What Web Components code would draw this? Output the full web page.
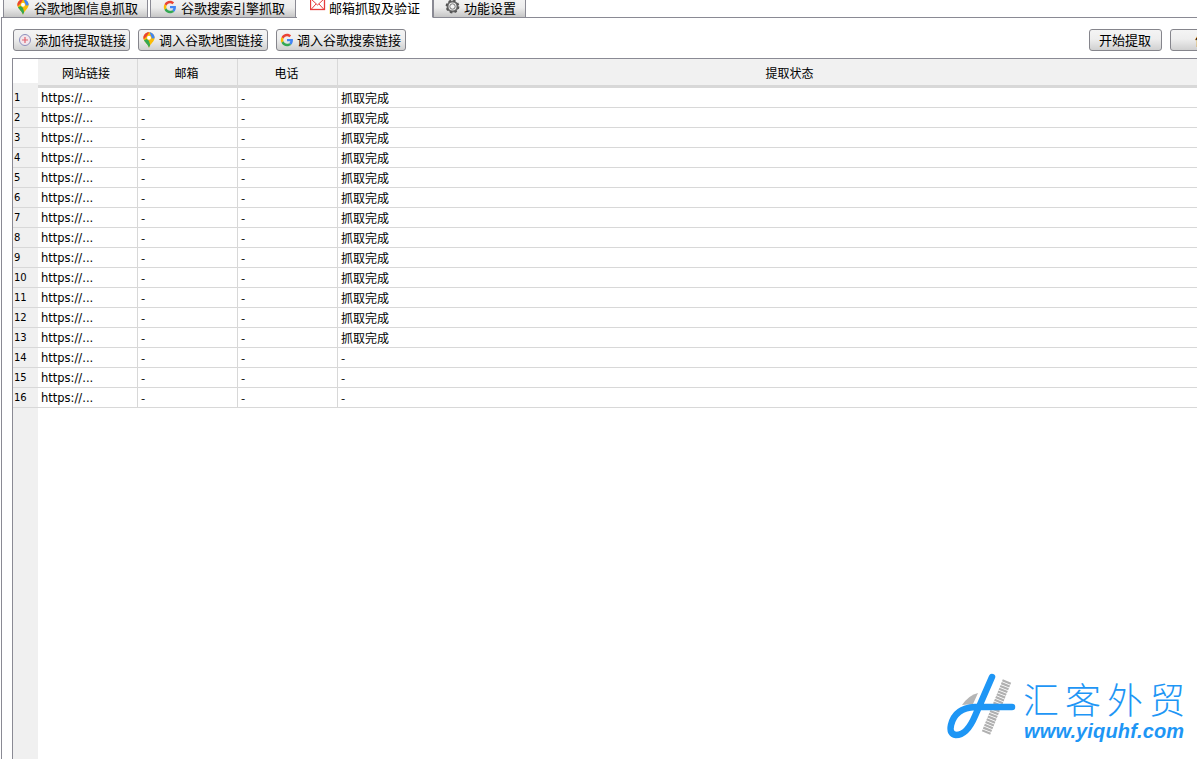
<!DOCTYPE html>
<html>
<head>
<meta charset="utf-8">
<style>
    html, body { margin: 0; height: 100%; overflow: hidden; background: #fff; }
    body { font-family: "Noto Sans CJK SC", "Liberation Sans", sans-serif; color: #000; }
</style>
</head>
<body>
<app-window>
    <tab-bar slot="tabs">
        <tab-item style="margin-left:3px;width:145px" pad="11"><app-icon name="map" slot="icon"></app-icon>谷歌地图信息抓取</tab-item>
        <tab-item style="margin-left:2px;width:146px" pad="11"><app-icon name="google" slot="icon"></app-icon>谷歌搜索引擎抓取</tab-item>
        <tab-item style="margin-left:1px;width:136px" pad="13" active><app-icon name="mail" slot="icon"></app-icon>邮箱抓取及验证</tab-item>
        <tab-item style="width:93px" pad="11"><app-icon name="gear" slot="icon"></app-icon>功能设置</tab-item>
    </tab-bar>
    <tool-bar slot="tools">
        <tool-button style="width:117px;padding-left:3px"><app-icon name="plus" slot="icon"></app-icon>添加待提取链接</tool-button>
        <tool-button style="width:130px"><app-icon name="map" slot="icon"></app-icon>调入谷歌地图链接</tool-button>
        <tool-button style="width:130px"><app-icon name="google" slot="icon"></app-icon>调入谷歌搜索链接</tool-button>
        <tool-button style="width:73px;margin-left:auto;padding-left:9px">开始提取</tool-button>
        <tool-button style="width:103px;padding-left:24px">停止提取</tool-button>
    </tool-bar>
    <data-table slot="table"></data-table>
</app-window>
<brand-logo></brand-logo>

<script>
class AppWindow extends HTMLElement {
    constructor() {
        super();
        this.root = this.attachShadow({ mode: 'open' });
        this.root.innerHTML = `
            <style>
                :host { display: flex; flex-direction: column; width: 1197px; height: 759px; overflow: hidden; }
                #pane {
                    flex: 1;
                    min-height: 0;
                    display: flex;
                    flex-direction: column;
                    margin-top: -1px;
                    margin-left: 1px;
                    border-top: 1px solid #8a8a94;
                    border-left: 1px solid #8a8a94;
                    padding: 11px 0 0 10px;
                    gap: 8px;
                }
            </style>
            <slot name="tabs"></slot>
            <div id="pane">
                <slot name="tools"></slot>
                <slot name="table"></slot>
            </div>
        `;
    }
}

class TabBar extends HTMLElement {
    constructor() {
        super();
        this.root = this.attachShadow({ mode: 'open' });
        this.root.innerHTML = `
            <style>
                :host { display: flex; align-items: flex-end; height: 18px; position: relative; z-index: 1; }
            </style>
            <slot></slot>
        `;
    }
}

class TabItem extends HTMLElement {
    constructor() {
        super();
        this.root = this.attachShadow({ mode: 'open' });
        this.root.innerHTML = `
            <style>
                :host {
                    display: flex;
                    align-items: center;
                    gap: 3px;
                    box-sizing: border-box;
                    height: 18px;
                    padding-left: ${this.getAttribute('pad')}px;
                    padding-bottom: 2px;
                    border: 1px solid #8a8a94;
                    border-top: 0;
                    background: linear-gradient(#f2f2f2, #ececec 45%, #c6c6c6);
                    font-size: 13px;
                    line-height: 16px;
                    white-space: nowrap;
                }
                :host([active]) { background: #fff; border-bottom-color: #fff; border-left: 0; border-right-color: #8a8a94; }
                ::slotted(app-icon) { margin-bottom: 1px; }
            </style>
            <slot name="icon"></slot><slot></slot>
        `;
    }
}

class ToolBar extends HTMLElement {
    constructor() {
        super();
        this.root = this.attachShadow({ mode: 'open' });
        this.root.innerHTML = `
            <style>
                :host { display: flex; gap: 8px; width: 1260px; height: 21px; padding-left: 1px; flex: none; }
            </style>
            <slot></slot>
        `;
    }
}

class ToolButton extends HTMLElement {
    constructor() {
        super();
        this.root = this.attachShadow({ mode: 'open' });
        this.root.innerHTML = `
            <style>
                :host {
                    display: flex;
                    align-items: center;
                    gap: 2px;
                    box-sizing: border-box;
                    flex: none;
                    height: 22px;
                    padding: 0 0 2px 2px;
                    border: 1px solid #85858c;
                    border-radius: 3px;
                    background: linear-gradient(#f4f4f4, #eeeeee 45%, #d0d0d0);
                    font-size: 13px;
                    white-space: nowrap;
                }
                ::slotted(app-icon) { margin-bottom: -2px; }
            </style>
            <slot name="icon"></slot><slot></slot>
        `;
    }
}

class AppIcon extends HTMLElement {
    constructor() {
        super();
        this.root = this.attachShadow({ mode: 'open' });
        const icons = {
            map: `<svg width="16" height="16" viewBox="0 0 16 16">
                    <defs><clipPath id="p"><path d="M8 .2C4.800 .2 2.400 2.800 2.400 5.800c0 3.800 4.100 5.600 5.600 10 1.500-4.400 5.600-6.200 5.600-10C13.600 2.800 11.200 .2 8 .2z"/></clipPath></defs>
                    <g clip-path="url(#p)">
                        <rect width="16" height="16" fill="#fbbc04"/>
                        <path d="M2 16V8.500l4-1.500 2 2 2 7z" fill="#34a853"/>
                        <path d="M8.500 0H16v6l-5 .5z" fill="#4285f4"/>
                        <path d="M2 0h6.500L5.500 4.500 2 8z" fill="#ea4335"/>
                    </g>
                    <circle cx="8" cy="5.800" r="2" fill="#fff"/>
                  </svg>`,
            google: `<svg width="16" height="16" viewBox="-7 -7 62 62">
                    <path fill="#ea4335" d="M24 9.500c3.500 0 6.700 1.300 9.100 3.400l6.800-6.800C35.800 2.400 30.300 0 24 0 14.600 0 6.500 5.400 2.600 13.200l7.900 6.100C12.400 13.600 17.700 9.500 24 9.500z"/>
                    <path fill="#4285f4" d="M47 24.500c0-1.600-.1-3.100-.4-4.500H24v9h13c-.6 3-2.300 5.500-4.800 7.200l7.700 6C44.400 37.900 47 31.800 47 24.500z"/>
                    <path fill="#fbbc05" d="M10.500 28.700c-.5-1.500-.8-3-.8-4.700s.3-3.200.8-4.700l-7.900-6.100C.9 16.500 0 20.100 0 24s.9 7.500 2.600 10.800z"/>
                    <path fill="#34a853" d="M24 48c6.500 0 11.900-2.100 15.900-5.800l-7.700-6c-2.100 1.400-4.900 2.300-8.200 2.300-6.300 0-11.600-4.100-13.500-9.800l-7.900 6.100C6.500 42.600 14.600 48 24 48z"/>
                  </svg>`,
            mail: `<svg width="16" height="16" viewBox="0 0 16 16" fill="none" stroke="#e63c3c" style="margin-top:-5px">
                    <rect x=".5" y="1.500" width="14" height="11" fill="#fff" stroke-width="1.300"/>
                    <path d="M1 2l6.500 6L14 2M1 12.500l5-5.500M14 12.500l-5-5.500"/>
                  </svg>`,
            gear: `<svg width="16" height="16" viewBox="0 0 16 16">
                    <circle cx="7.500" cy="7.500" r="5" fill="none" stroke="#666" stroke-width="2"/>
                    <circle cx="7.500" cy="7.500" r="6" fill="none" stroke="#555" stroke-width="1.800" stroke-dasharray="2.400 2.310"/>
                    <circle cx="7.500" cy="7.500" r="2.700" fill="#f4f4f4" stroke="#777"/>
                  </svg>`,
            plus: `<svg width="16" height="16" viewBox="0 0 16 16">
                    <circle cx="8" cy="8" r="5.500" fill="#f3e6ec" stroke="#8b8fbc"/>
                    <path d="M8 5v6M5 8h6" stroke="#e0626e" stroke-width="1.200"/>
                  </svg>`
        };
        this.root.innerHTML = `
            <style>:host { display: inline-flex; flex: none; }</style>
            ${icons[this.getAttribute('name')]}
        `;
    }
}

class DataTable extends HTMLElement {
    constructor() {
        super();
        this.root = this.attachShadow({ mode: 'open' });
        this.headers = ['网站链接', '邮箱', '电话', '提取状态'];
    }

    connectedCallback() {
        this.render();
    }

    render() {
        let rows = '';
        for (let i = 1; i <= 16; i++) {
            rows += `
                <div class="num">${i}</div>
                <div class="cell link">https://...</div>
                <div class="cell">-</div>
                <div class="cell">-</div>
                <div class="cell status">${i <= 13 ? '抓取完成' : '-'}</div>
            `;
        }
        this.root.innerHTML = `
            <style>
                :host {
                    display: block;
                    flex: 1;
                    min-height: 0;
                    overflow: hidden;
                    border-top: 1px solid #8a8a94;
                    border-left: 1px solid #8a8a94;
                    background: linear-gradient(90deg, #f0f0f0 25px, #fff 25px);
                }
                #grid {
                    display: grid;
                    grid-template-columns: 25px 100px 100px 100px 902px;
                    grid-template-rows: 29px repeat(16, 20px);
                    width: 1227px;
                    font-size: 12px;
                }
                .corner { background: linear-gradient(#fff 0 24px, #f0f0f0 24px); border-bottom: 3px solid #f0f0f0; box-sizing: border-box; }
                .head {
                    display: flex;
                    align-items: center;
                    justify-content: center;
                    box-sizing: border-box;
                    background: #f1f1f1;
                    border-right: 1px solid #d8d8d8;
                    border-bottom: 3px solid #d8d8d8;
                    padding: 1px 2px 0 0;
                }
                .head:nth-child(2) { padding-right: 3px; }
                .head:nth-child(5) { padding: 1px 0 0 2px; }
                .num {
                    display: flex;
                    align-items: center;
                    box-sizing: border-box;
                    padding: 0 0 0 1px;
                    background: #f0f0f0;
                    border-bottom: 1px solid #d8d8d8;
                    font-family: "DejaVu Sans", sans-serif;
                    font-size: 10px;
                }
                .cell {
                    display: flex;
                    align-items: center;
                    box-sizing: border-box;
                    padding-left: 3px;
                    background: #fff;
                    border-right: 1px solid #d8d8d8;
                    border-bottom: 1px solid #d8d8d8;
                }
                .status { padding-bottom: 1px; }
                .link { font-family: "DejaVu Sans", sans-serif; font-size: 11.500px; }
            </style>
            <div id="grid">
                <div class="corner"></div>
                ${this.headers.map(h => `<div class="head">${h}</div>`).join('')}
                ${rows}
            </div>
        `;
    }
}

class BrandLogo extends HTMLElement {
    constructor() {
        super();
        this.root = this.attachShadow({ mode: 'open' });
        this.root.innerHTML = `
            <style>
                :host {
                    position: absolute;
                    left: 945px;
                    top: 672px;
                    display: flex;
                    gap: 8px;
                    color: #1e96f5;
                    z-index: 2;
                }
                #words { display: flex; flex-direction: column; align-items: flex-start; padding-top: 5px; }
                #cn { font-size: 36px; line-height: 42px; letter-spacing: 6px; font-weight: 300; white-space: nowrap; margin-left: -1px; }
                #en { font: italic bold 20px/21px "Liberation Sans", sans-serif; margin-top: 2px; letter-spacing: .15px; white-space: nowrap; }
            </style>
            <svg width="71" height="70" viewBox="945 672 71 70" fill="none">
                <path d="M962 705Q969 695 978 693L973 704Z" fill="#b5b5b5"/>
                <path d="M1007 681L986 733" stroke="#b0b0b0" stroke-width="9" stroke-dasharray="2.200 .8"/>
                <path d="M992 677L975 716Q967 735 956 735Q949 734 951 725Q955 708 975 707L1012 707" stroke="#1e96f5" stroke-width="6.500" stroke-linecap="round"/>
            </svg>
            <div id="words">
                <div id="cn">汇客外贸</div>
                <div id="en">www.yiquhf.com</div>
            </div>
        `;
    }
}

customElements.define('app-window', AppWindow);
customElements.define('tab-bar', TabBar);
customElements.define('tool-bar', ToolBar);
customElements.define('tab-item', TabItem);
customElements.define('tool-button', ToolButton);
customElements.define('app-icon', AppIcon);
customElements.define('data-table', DataTable);
customElements.define('brand-logo', BrandLogo);
</script>
</body>
</html>
